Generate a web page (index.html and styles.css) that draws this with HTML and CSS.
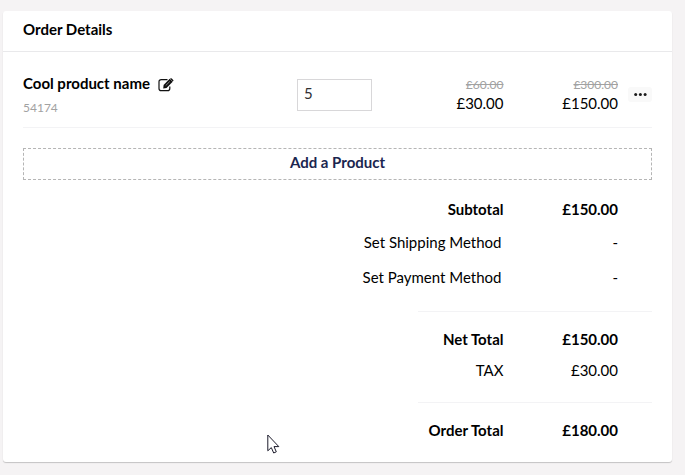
FILE: index.html
```html
<!DOCTYPE html>
<html lang="en">
<head>
  <meta charset="UTF-8" />
  <meta name="viewport" content="width=device-width, initial-scale=1.0"/>
  <title>Order Details</title>
  <link rel="stylesheet" href="styles.css">
</head>
<body>
  <div class="box">
    <h3 class="box-header">Order Details</h3>

    <div class="box-content">
      <div class="order-line">
        <div class="product">
          <div class="product-name">
            <span>Cool product name</span>
            <svg class="edit-icon" viewBox="0 0 16 14" width="16" height="14">
              <path d="M9.5 1.7H3.2Q1 1.7 1 3.8V10.4Q1 12.6 3.2 12.6H9.6Q11.8 12.6 11.8 10.4V8.4" fill="none" stroke="#111" stroke-width="1.2"/>
              <path d="M5.2 10.4L5.6 6.9L11.7 .8L14.7 3.7L8.5 9.9Z" fill="#111"/>
              <path d="M12.3 .5Q13.1 -.2 13.8 .5L15.2 1.9Q15.8 2.5 15.2 3.1L14.8 3.5L12 .8Z" fill="#111"/>
              <path d="M7.7 7.6L11.8 3.5" stroke="#fff" stroke-width=".5"/>
            </svg>
          </div>
          <div class="sku">54174</div>
        </div>
        <input class="quantity" type="text" value="5" aria-label="Quantity">
        <div class="price">
          <del>£60.00</del>
          <span>£30.00</span>
        </div>
        <div class="price">
          <del>£300.00</del>
          <span>£150.00</span>
        </div>
        <button class="more" type="button" aria-label="More">
          <svg viewBox="0 0 13 3" width="13" height="3">
            <circle cx="1.7" cy="1.5" r="1.5"/>
            <circle cx="6.4" cy="1.5" r="1.5"/>
            <circle cx="11.1" cy="1.5" r="1.5"/>
          </svg>
        </button>
      </div>

      <button class="add-product" type="button">Add a Product</button>

      <div class="totals">
        <div class="total-row bold">
          <span>Subtotal</span><span>£150.00</span>
        </div>
        <div class="total-row shipping">
          <a>Set Shipping Method</a><span>-</span>
        </div>
        <div class="total-row payment">
          <a>Set Payment Method</a><span>-</span>
        </div>
        <hr>
        <div class="total-row bold">
          <span>Net Total</span><span>£150.00</span>
        </div>
        <div class="total-row tax">
          <span>TAX</span><span>£30.00</span>
        </div>
        <hr>
        <div class="total-row bold">
          <span>Order Total</span><span>£180.00</span>
        </div>
      </div>
    </div>
  </div>

  <!-- mouse pointer -->
  <svg class="cursor" viewBox="0 0 13 20" width="13" height="20">
    <path d="M.8 1V16.8L4.3 13.6L6.7 19L9.3 17.8L7 12.6H11.8Z" fill="#fff" stroke="#1c1b2b" stroke-width="1"/>
  </svg>
</body>
</html>
```

FILE: styles.css
```css
* {
  box-sizing: border-box;
}

body {
  margin: 0;
  padding: 11px 13px 13px 3px;
  background: #f5f3f4;
  color: #000;
  font-family: Lato, "Open Sans", sans-serif;
  font-size: 15px;
  line-height: 20px;
}

.box {
  height: 451px;
  background: #fff;
  border-radius: 3px;
  box-shadow: 0 1px 1px rgba(0, 0, 0, 0.2);
}

.box-header {
  height: 41px;
  margin: 0;
  padding: 8px 20px 0;
  border-bottom: 1px solid #e9e9eb;
  font-size: 15px;
  font-weight: bold;
}

.box-content {
  padding: 0 20px;
}

.order-line {
  display: grid;
  grid-template-columns: 274px 75px 131.5px 114.5px 24px;
  height: 76px;
  border-bottom: 1px solid #f3f3f5;
}

.product {
  padding-top: 21px;
}

.product-name {
  display: flex;
  align-items: center;
  gap: 8px;
  font-weight: bold;
}

.edit-icon {
  margin-top: 4px;
}

.sku {
  margin-top: 5px;
  color: #a2a2a2;
  font-size: 12px;
}

.quantity {
  width: 75px;
  height: 32px;
  margin-top: 27px;
  padding: 0 6px 4px;
  border: 1px solid #d8d7d9;
  color: #303033;
  font-family: inherit;
  font-size: 15px;
}

.price {
  padding-top: 25px;
  text-align: right;
}

.price del {
  display: block;
  height: 16px;
  line-height: 16px;
  color: #a2a2a2;
  font-size: 12px;
}

button {
  border: none;
  cursor: pointer;
  font-family: inherit;
}

.more {
  display: flex;
  align-items: center;
  justify-content: center;
  width: 24px;
  height: 15px;
  margin: 35px 0 0 10px;
  padding: 0;
  background: #f9f9f9;
  border-radius: 3px;
  fill: #1b1b1b;
}

.add-product {
  display: block;
  width: 100%;
  height: 32px;
  margin-top: 20px;
  padding: 0 0 4px;
  background: #fff;
  border: 1px dashed #b5b5b5;
  color: #1b264f;
  font-size: 15px;
  font-weight: bold;
}

.totals {
  padding-top: 13px;
}

.total-row {
  display: grid;
  grid-template-columns: 1fr 114.5px;
  align-items: center;
  height: 32px;
  padding-right: 34px;
  text-align: right;
}

.total-row a {
  padding-right: 2px;
}

.bold {
  font-weight: bold;
}

.shipping {
  height: 34px;
}

.payment {
  height: 36px;
}

.tax {
  height: 31px;
  padding-bottom: 1px;
}

hr {
  width: 234px;
  height: 1px;
  margin: 16px 0 11px auto;
  border: none;
  background: #f3f3f5;
}

.cursor {
  position: absolute;
  left: 267px;
  top: 434px;
}
```
